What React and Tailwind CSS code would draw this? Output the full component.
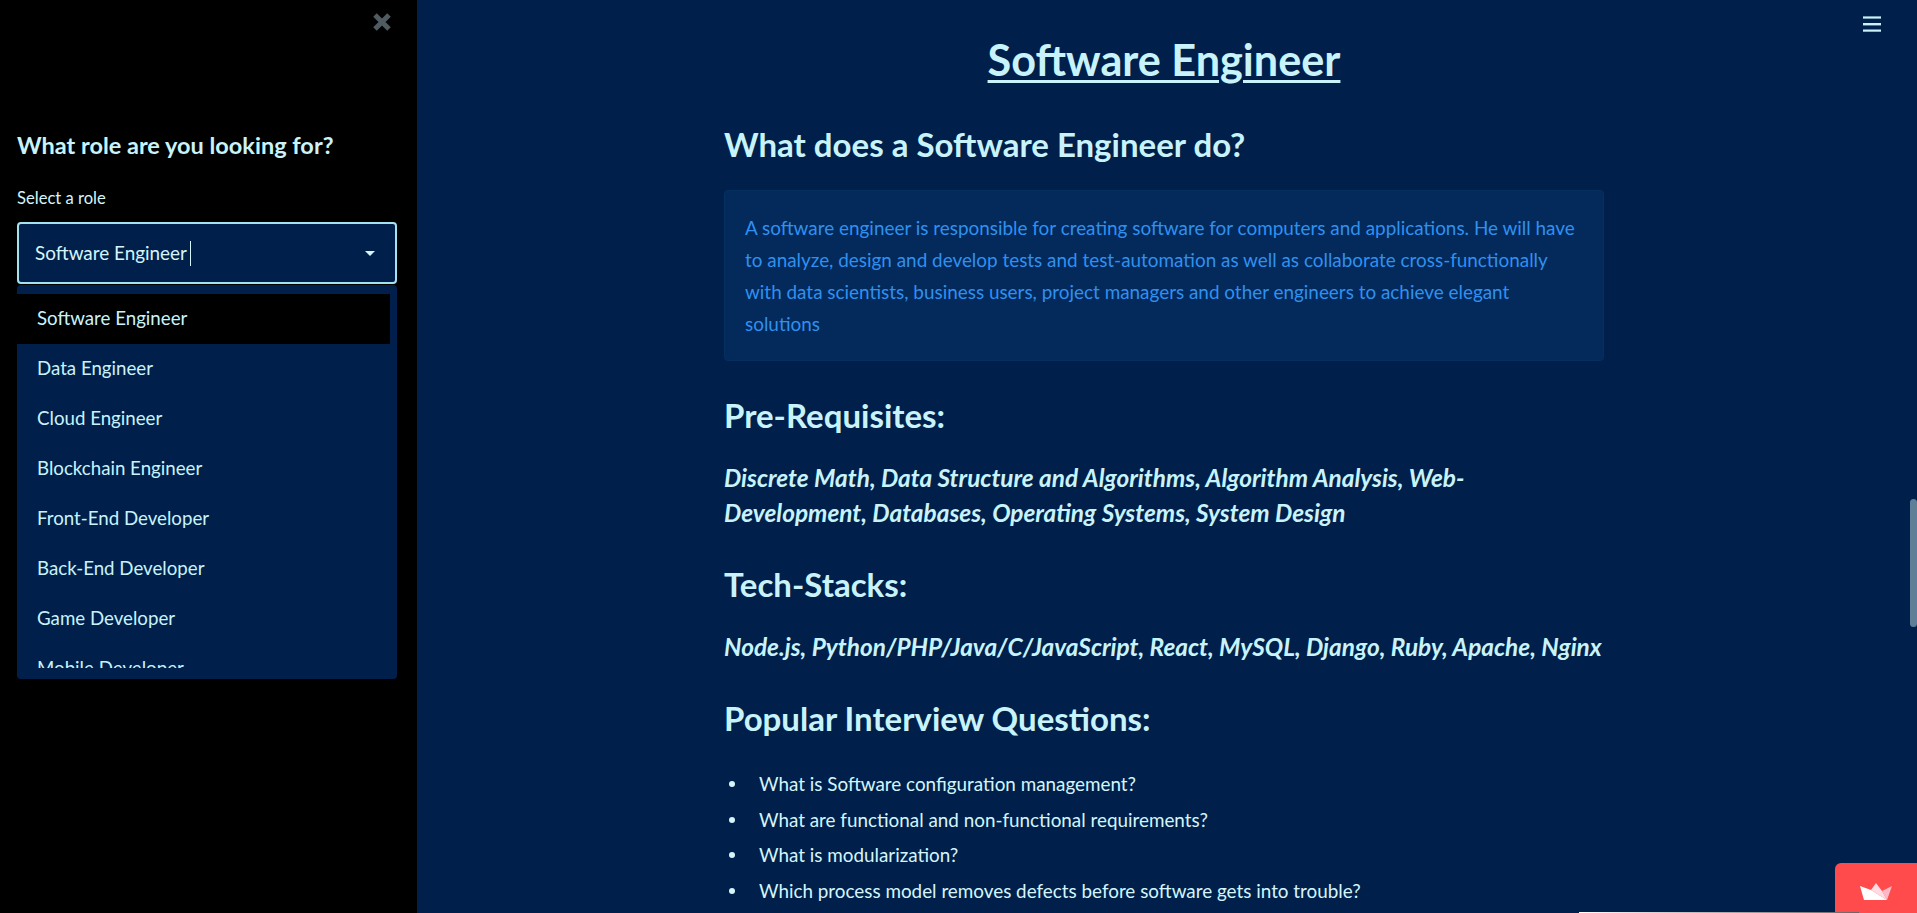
const roles = ['Data Engineer', 'Cloud Engineer', 'Blockchain Engineer', 'Front-End Developer', 'Back-End Developer', 'Game Developer', 'Mobile Developer']

const questions = [
  'What is Software configuration management?',
  'What are functional and non-functional requirements?',
  'What is modularization?',
  'Which process model removes defects before software gets into trouble?',
]

function Sidebar() {
  return (
    <aside className="w-[417px] shrink-0 h-full bg-black relative pl-[17px] pr-[20px]">
      <svg className="absolute left-[373px] top-[13px]" width="18" height="18" viewBox="0 0 18 18" stroke="#4f5b60" strokeWidth="5">
        <path d="M2 2 L16 16 M16 2 L2 16" />
      </svg>
      <h2 className="pt-[128px] text-[23.5px] leading-[34px] font-bold text-[#c9f3fb]">What role are you looking for?</h2>
      <div className="mt-[26px] text-[16.6px] leading-[20px] text-[#d5f5fb]">Select a role</div>
      <div className="mt-[14px] h-[62px] rounded-[4px] border-2 border-[#a3e3ef] bg-[#00204b] flex items-center pl-[16px] pr-[20px] text-[18.9px] text-[#d5f5fb]">
        <span>Software Engineer</span>
        <span className="w-px h-[25px] bg-[#d5f5fb] ml-[3px]" />
        <span className="ml-auto w-0 h-0 border-x-[5px] border-x-transparent border-t-[5px] border-t-[#d5f5fb]" />
      </div>
      <div className="h-[394px] mt-px rounded-[4px] bg-[#00204b] pt-[9px] overflow-hidden">
        <div className="h-[374px] overflow-hidden text-[18.7px] text-[#c9f3fb]">
          <div className="h-[50px] w-[373px] bg-black flex items-center pl-[20px] pb-[2px]">Software Engineer</div>
          {roles.map((role) => (
            <div key={role} className="h-[50px] flex items-center pl-[20px] pb-[2px]">{role}</div>
          ))}
        </div>
      </div>
    </aside>
  )
}

function Content() {
  return (
    <main className="flex-1 h-full overflow-hidden text-[#c9f3fb]">
      <div className="ml-[307px] w-[880px]">
        <h1 className="pt-[31px] text-[43.2px] leading-[56px] font-bold text-center underline decoration-[3px] underline-offset-[4px]">Software Engineer</h1>
        <h2 className="mt-[36px] text-[33px] leading-[42px] font-bold">What does a Software Engineer do?</h2>
        <div className="mt-[25px] h-[171px] rounded-[4px] border border-[#03305f] bg-[#032a5a] px-[20px] pt-[21px] text-[18.9px] leading-[32px] text-[#3090f0]">
          A software engineer is responsible for creating software for computers and applications. He will have<br />
          to analyze, design and develop tests and test-automation as well as collaborate cross-functionally<br />
          with data scientists, business users, project managers and other engineers to achieve elegant<br />
          solutions
        </div>
        <h2 className="mt-[33px] text-[33px] leading-[42px] font-bold">Pre-Requisites:</h2>
        <p className="mt-[24px] text-[24.4px] leading-[35px] font-bold italic">
          Discrete Math, Data Structure and Algorithms, Algorithm Analysis, Web-<br />Development, Databases, Operating Systems, System Design
        </p>
        <h2 className="mt-[33px] text-[33px] leading-[42px] font-bold">Tech-Stacks:</h2>
        <p className="mt-[24px] text-[24.4px] leading-[35px] font-bold italic whitespace-nowrap">
          Node.js, Python/PHP/Java/C/JavaScript, React, MySQL, Django, Ruby, Apache, Nginx
        </p>
        <h2 className="mt-[33px] text-[33px] leading-[42px] font-bold">Popular Interview Questions:</h2>
        <ul className="mt-[27px] text-[18.85px] text-[#d5f5fb]">
          {questions.map((q) => (
            <li key={q} className="h-[35.8px] flex items-center">
              <span className="w-[6px] h-[6px] rounded-full bg-[#d5f5fb] ml-[5px] mr-[24px]" />
              {q}
            </li>
          ))}
        </ul>
      </div>
    </main>
  )
}

export default function App() {
  return (
    <div className="relative flex w-full h-screen overflow-hidden bg-[#00204b] font-['Lato','Noto_Sans',sans-serif]">
      <Sidebar />
      <Content />

      {/* hamburger */}
      <svg className="absolute left-[1863px] top-[16px]" width="18" height="16" viewBox="0 0 18 16" fill="#c9f3fb">
        <rect y="0.4" width="18" height="2.2" />
        <rect y="7" width="18" height="2.4" />
        <rect y="13.5" width="18" height="2.2" />
      </svg>

      {/* page scrollbar */}
      <div className="absolute left-[1910px] top-[499px] w-[7px] h-[128px] rounded-full bg-[#5f7f99]" />

      {/* streamlit badge */}
      <div className="absolute right-0 bottom-0 w-[82px] h-[50px] bg-[#ff4b4b] rounded-tl-[6px]">
        <svg className="absolute left-[25px] top-[20px]" width="33" height="17" viewBox="0 0 33 17">
          <path d="M22 8 L32 3 L27 17 Z" fill="#ffb8c6" />
          <path d="M11 7 L16 0 L22 8 L27 17 Z" fill="#ffdbe3" />
          <path d="M0 3 L11 7 L27 17 L4 17 Z" fill="#ffffff" />
        </svg>
      </div>
      <div className="absolute left-[1579px] bottom-0 w-[280px] h-px bg-gradient-to-r from-white to-[#666666]" />
    </div>
  )
}
